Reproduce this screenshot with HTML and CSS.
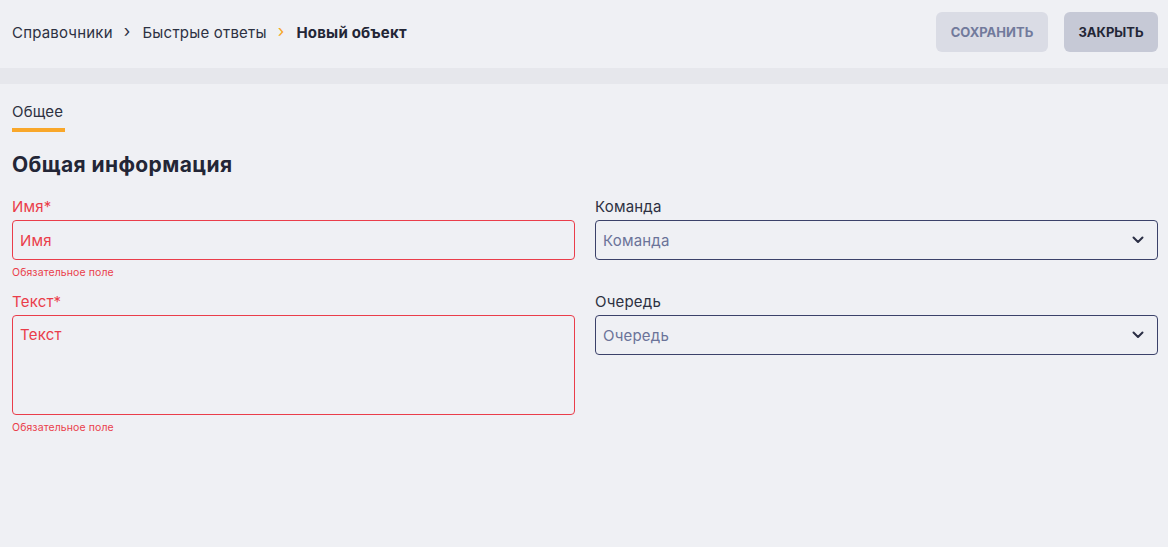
FILE: index.html
```html
<!DOCTYPE html>
<html lang="ru">
<head>
  <meta charset="UTF-8">
  <title>Новый объект</title>
  <link rel="stylesheet" href="styles.css">
</head>
<body>

  <div class="topbar">
    <div class="crumbs">
      <span>Справочники</span>
      <span class="sep">›</span>
      <span>Быстрые ответы</span>
      <span class="sep active">›</span>
      <b>Новый объект</b>
    </div>
    <div class="actions">
      <button class="btn save">СОХРАНИТЬ</button>
      <button class="btn close">ЗАКРЫТЬ</button>
    </div>
  </div>

  <div class="band"></div>

  <div class="content">
    <div class="tabs">
      <div class="tab active">Общее</div>
    </div>

    <h2>Общая информация</h2>

    <div class="form">
      <div class="col">
        <div class="field error">
          <label>Имя*</label>
          <div class="input">Имя</div>
          <div class="hint">Обязательное поле</div>
        </div>
        <div class="field error">
          <label>Текст*</label>
          <div class="input area">Текст</div>
          <div class="hint">Обязательное поле</div>
        </div>
      </div>

      <div class="col">
        <div class="field">
          <label>Команда</label>
          <div class="input select">
            <span>Команда</span>
            <svg width="14" height="14" viewBox="0 0 14 14"><path d="M2.5 4.5 L7 9 L11.5 4.5" fill="none" stroke="#2b2f45" stroke-width="2" stroke-linecap="round" stroke-linejoin="round"/></svg>
          </div>
        </div>
        <div class="field">
          <label>Очередь</label>
          <div class="input select">
            <span>Очередь</span>
            <svg width="14" height="14" viewBox="0 0 14 14"><path d="M2.5 4.5 L7 9 L11.5 4.5" fill="none" stroke="#2b2f45" stroke-width="2" stroke-linecap="round" stroke-linejoin="round"/></svg>
          </div>
        </div>
      </div>
    </div>
  </div>

</body>
</html>
```

FILE: styles.css
```css
body {
  margin: 0;
  font-family: Inter, "Noto Sans", sans-serif;
  background: #eff0f4;
  color: #232636;
}

.topbar {
  height: 68px;
  display: flex;
  align-items: center;
  justify-content: space-between;
  padding: 0 10px 4px 12px;
  box-sizing: border-box;
}

.crumbs {
  display: flex;
  align-items: center;
  font-size: 15px;
  letter-spacing: 0.2px;
  color: #2d3142;
}

.crumbs .sep {
  margin: 0 12px 0 11px;
  font-size: 17px;
  line-height: 1;
  position: relative;
  top: -1px;
}

.crumbs .sep.active { color: #f5a623; }

.crumbs b { font-weight: 700; color: #232636; }

.actions {
  display: flex;
  gap: 16px;
}

.btn {
  height: 40px;
  border: none;
  border-radius: 6px;
  font-family: inherit;
  font-size: 13px;
  font-weight: 700;
  padding: 0;
  cursor: pointer;
}

.btn.save {
  width: 112px;
  background: #dadce5;
  color: #717a9c;
}

.btn.close {
  width: 94px;
  background: #c6c9d6;
  color: #232636;
}

.band {
  height: 16px;
  background: #e6e7ec;
}

.content {
  padding: 0 10px 0 12px;
}

.tabs {
  display: flex;
  padding-top: 18px;
}

.tab {
  font-size: 15px;
  letter-spacing: 0.2px;
  color: #2d3142;
  padding-bottom: 7px;
  border-bottom: 4px solid #f9a72a;
  width: 53px;
  box-sizing: border-box;
}

h2 {
  margin: 21px 0 0;
  font-size: 21px;
  letter-spacing: 0.4px;
  font-weight: 700;
  line-height: 24px;
}

.form {
  display: grid;
  grid-template-columns: 1fr 1fr;
  gap: 20px;
  margin-top: 20px;
}

.col {
  display: flex;
  flex-direction: column;
}

.field {
  min-height: 95px;
}

label {
  display: block;
  font-size: 15px;
  letter-spacing: 0.2px;
  line-height: 20px;
  margin-bottom: 3px;
  color: #2d3142;
}

.input {
  height: 40px;
  box-sizing: border-box;
  border: 1px solid #3b4169;
  border-radius: 4px;
  padding: 0 7px;
  display: flex;
  align-items: center;
  font-size: 15px;
  letter-spacing: 0.2px;
  color: #6b7399;
}

.input.area {
  height: 100px;
  align-items: flex-start;
  padding-top: 9px;
}

.select {
  justify-content: space-between;
  padding-right: 12px;
}

.select svg { display: block; }

.error label,
.error .input,
.error .hint {
  color: #ea3d4a;
}

.error .input { border-color: #ea3d4a; }

.hint {
  font-size: 10.5px;
  letter-spacing: 0.1px;
  margin-top: 6px;
}
```
